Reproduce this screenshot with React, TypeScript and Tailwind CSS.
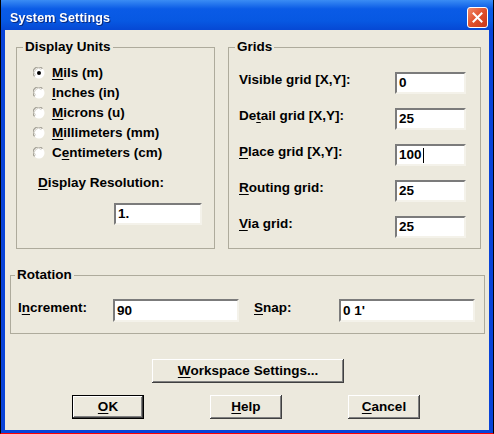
import React from "react";

const font = { fontFamily: '"Liberation Sans", Arial, sans-serif' };

function U({ children }: { children: React.ReactNode }) {
  return <span className="underline underline-offset-[2px] decoration-1">{children}</span>;
}

function Radio({ checked }: { checked?: boolean }) {
  return (
    <svg width="12" height="12" viewBox="0 0 12 12" className="shrink-0">
      <circle cx="6" cy="6" r="5.5" fill="#ffffff" />
      <path d="M1.6 9.4 A5.2 5.2 0 0 1 9.4 1.6" fill="none" stroke="#a09d92" strokeWidth="1.2" />
      <path d="M2.6 8.4 A4 4 0 0 1 8.4 2.6" fill="none" stroke="#cfccc2" strokeWidth="1" />
      {checked && <circle cx="6" cy="6" r="2" fill="#000" />}
    </svg>
  );
}

function Field({ value, w, h = 22, caret }: { value: string; w: number; h?: number; caret?: boolean }) {
  return (
    <div
      className="bg-white border-2 border-t-[#7b7b7b] border-l-[#7b7b7b] border-b-[#f4f2ea] border-r-[#f4f2ea] flex items-center pl-[2px] text-black font-bold text-[13.5px] leading-none shrink-0"
      style={{ width: w, height: h }}
    >
      <span>{value}</span>
      {caret && <span className="inline-block w-px h-[15px] bg-black ml-px" />}
    </div>
  );
}

function Btn({ children, w, def }: { children: React.ReactNode; w: number; def?: boolean }) {
  return (
    <div
      className={
        "h-[24px] flex items-center justify-center font-bold text-[13.5px] text-black bg-[#ECE9DD] shrink-0 " +
        (def
          ? "border border-black shadow-[inset_-1px_-1px_#404040,inset_1px_1px_#fff,inset_-2px_-2px_#808080]"
          : "shadow-[inset_-1px_-1px_#404040,inset_1px_1px_#fff,inset_-2px_-2px_#808080]")
      }
      style={{ width: w }}
    >
      {children}
    </div>
  );
}

export default function App() {
  return (
    <div
      className="w-[494px] h-[434px] bg-[#0843d8] border-l border-l-black border-b border-b-[#ff0000] border-r border-r-black flex flex-col overflow-hidden"
      style={font}
    >
      {/* title bar */}
      <div className="h-[30px] shrink-0 flex items-center pl-[9px] pr-[4px] bg-[linear-gradient(#3a8cf4,#0a5be6_30%,#0758e2_70%,#0648d4)]">
        <span className="text-white font-bold text-[12.5px] tracking-[0.2px] drop-shadow-[1px_1px_0_#0a2a80] mt-[6px]">
          System Settings
        </span>
        <div className="ml-auto mt-[5px] mr-[1px] w-[21px] h-[21px] rounded-[3px] border border-white bg-[linear-gradient(135deg,#f08a6a,#e0502c_50%,#c8381a)] flex items-center justify-center">
          <svg width="11" height="11" viewBox="0 0 11 11">
            <path d="M1.5 1.5 L9.5 9.5 M9.5 1.5 L1.5 9.5" stroke="#fff" strokeWidth="2" strokeLinecap="square" />
          </svg>
        </div>
      </div>

      {/* content */}
      <div className="mx-[4px] h-[400px] bg-[#ECE9DD] text-black text-[13.5px] font-bold leading-[16px] flex flex-col pt-[9px]">
        <div className="flex pl-[11px] gap-[13px]">
          {/* Display Units */}
          <fieldset className="w-[199px] h-[210px] border border-[#aeab9c] flex flex-col">
            <legend className="ml-[6px] px-[2px] leading-[16px]">Display Units</legend>
            <div className="pt-[8px] flex flex-col">
              {[
                [<><U>M</U>ils (m)</>, true],
                [<><U>I</U>nches (in)</>, false],
                [<><U>M</U>icrons (u)</>, false],
                [<><U>M</U>illimeters (mm)</>, false],
                [<>C<U>e</U>ntimeters (cm)</>, false],
              ].map(([label, c], i) => (
                <div key={i} className="flex items-center h-[20px] pl-[16px]">
                  <Radio checked={c as boolean} />
                  <span className="ml-[7px]">{label as React.ReactNode}</span>
                </div>
              ))}
            </div>
            <div className="mt-[12px] pl-[21px]">
              <U>D</U>isplay Resolution:
            </div>
            <div className="mt-[12px] pl-[97px]">
              <Field value="1." w={88} />
            </div>
          </fieldset>

          {/* Grids */}
          <fieldset className="w-[253px] h-[210px] border border-[#aeab9c]">
            <legend className="ml-[6px] px-[2px] leading-[16px]">Grids</legend>
            <div className="pt-[17px] flex flex-col gap-[14px]">
              {[
                [<>Visible grid [X,Y]:</>, "0", false],
                [<>De<U>t</U>ail grid [X,Y]:</>, "25", false],
                [<><U>P</U>lace grid [X,Y]:</>, "100", true],
                [<><U>R</U>outing grid:</>, "25", false],
                [<><U>V</U>ia grid:</>, "25", false],
              ].map(([label, v, caret], i) => (
                <div key={i} className="flex items-start pl-[10px] h-[22px]">
                  <span className="w-[156px] pt-0">{label as React.ReactNode}</span>
                  <Field value={v as string} w={71} caret={caret as boolean} />
                </div>
              ))}
            </div>
          </fieldset>
        </div>

        {/* Rotation */}
        <fieldset className="ml-[5px] mt-[18px] w-[475px] h-[67px] border border-[#aeab9c]">
          <legend className="ml-[4px] px-[2px] leading-[16px]">Rotation</legend>
          <div className="pt-[16px] pl-[7px] flex items-start">
            <span className="w-[95px] pt-[1px]">
              I<U>n</U>crement:
            </span>
            <Field value="90" w={126} h={23} />
            <span className="ml-[15px] w-[85px] pt-[1px]">
              <U>S</U>nap:
            </span>
            <Field value="0 1'" w={136} h={23} />
          </div>
        </fieldset>

        {/* Workspace */}
        <div className="mt-[25px] pl-[147px]">
          <Btn w={192}>
            <U>W</U>orkspace Settings...
          </Btn>
        </div>

        {/* OK Help Cancel */}
        <div className="mt-[12px] pl-[67px] flex">
          <Btn w={72} def>
            <U>O</U>K
          </Btn>
          <div className="ml-[66px]">
            <Btn w={72}>
              <U>H</U>elp
            </Btn>
          </div>
          <div className="ml-[66px]">
            <Btn w={72}>
              <U>C</U>ancel
            </Btn>
          </div>
        </div>
      </div>
    </div>
  );
}
